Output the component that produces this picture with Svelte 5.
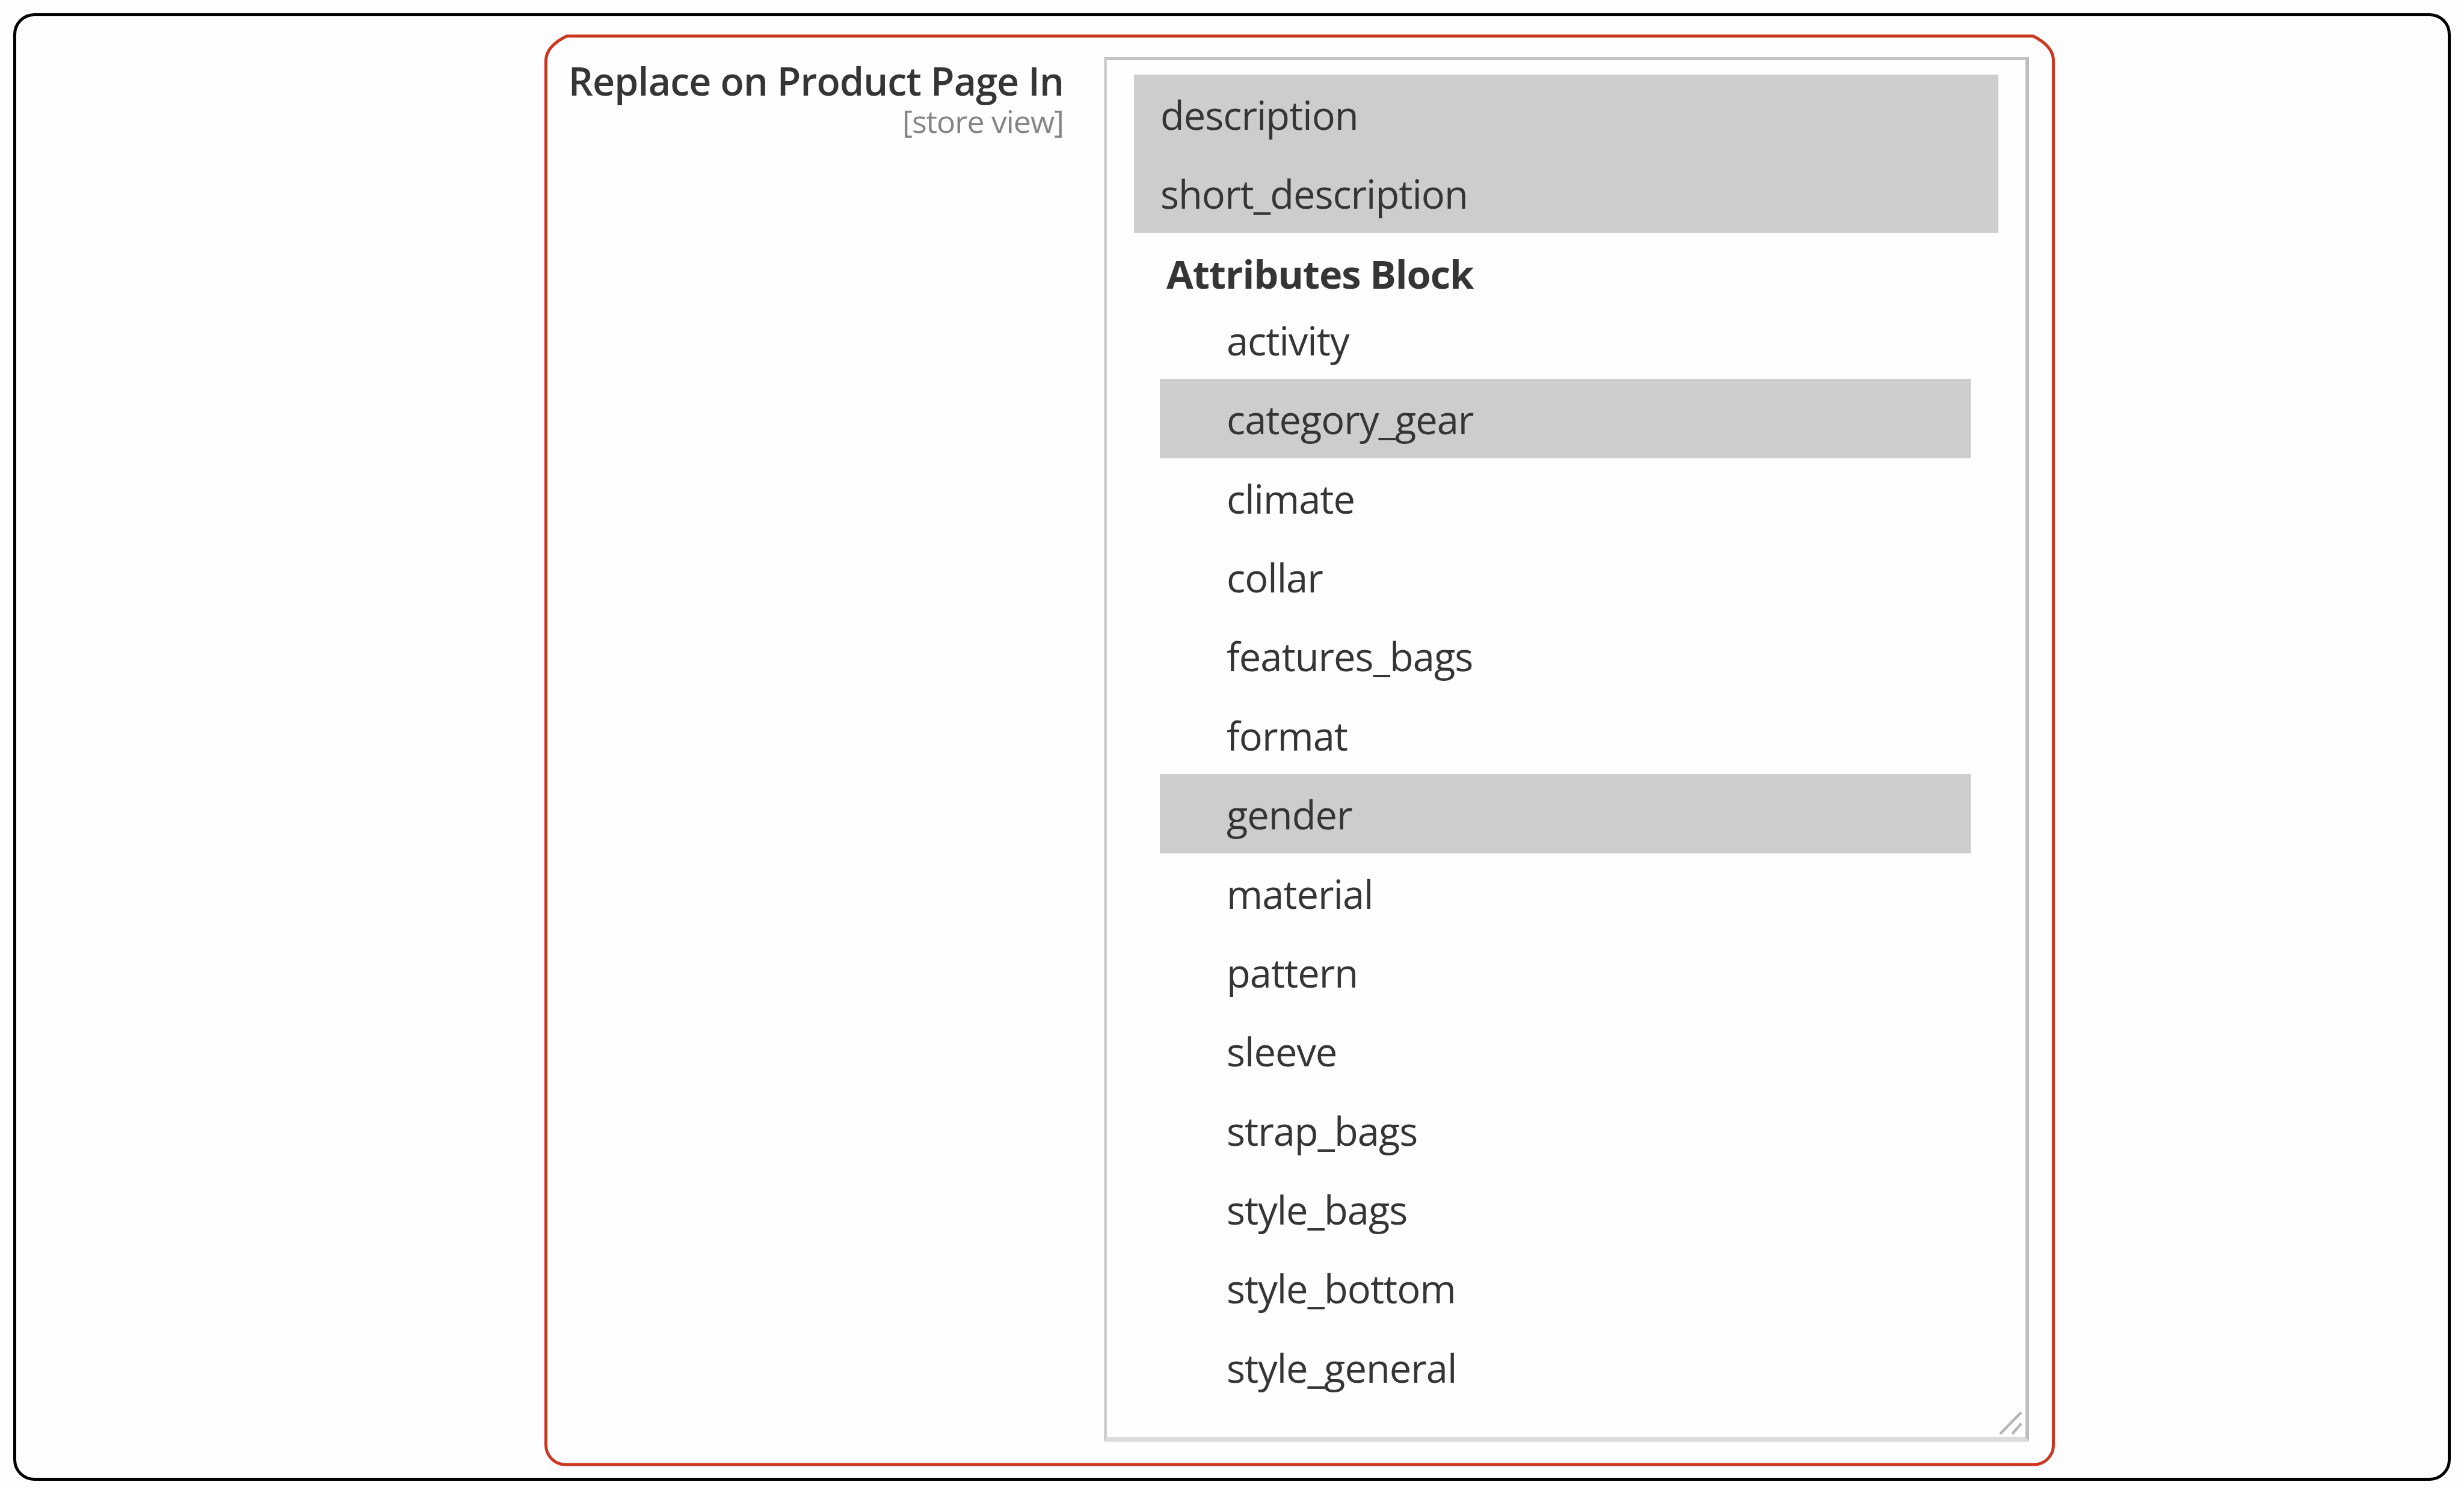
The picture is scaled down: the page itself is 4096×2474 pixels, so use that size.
<script lang="ts">
	/**
	 * Product page setting: multi-select of the attributes to be replaced
	 */
	interface Option {
		name: string;
		selected?: boolean;
	}

	const options: Option[] = [
		{ name: 'description', selected: true },
		{ name: 'short_description', selected: true }
	];

	const attributes: Option[] = [
		{ name: 'activity' },
		{ name: 'category_gear', selected: true },
		{ name: 'climate' },
		{ name: 'collar' },
		{ name: 'features_bags' },
		{ name: 'format' },
		{ name: 'gender', selected: true },
		{ name: 'material' },
		{ name: 'pattern' },
		{ name: 'sleeve' },
		{ name: 'strap_bags' },
		{ name: 'style_bags' },
		{ name: 'style_bottom' },
		{ name: 'style_general' }
	];
</script>

<main class="page">
	<section class="frame">
		<!-- Red highlight around the whole field -->
		<svg class="highlight" viewBox="0 0 4096 2474" fill="none" aria-hidden="true">
			<path
				d="M942 60H3380Q3413.500 77 3413.500 101V2403A32.500 32.500 0 0 1 3381 2435H940A32.500 32.500 0 0 1 907.500 2403V101Q907.500 77 942 60Z"
				stroke="#cc3520"
				stroke-width="5"
			/>
		</svg>

		<div class="field">
			<div class="field-label">
				<span class="title">Replace on Product Page In</span>
				<span class="scope">[store view]</span>
			</div>

			<div class="select" role="listbox" aria-multiselectable="true" aria-label="Replace on Product Page In">
				{#each options as option}
					<div class="option" class:selected={option.selected} role="option" aria-selected={!!option.selected}>
						{option.name}
					</div>
				{/each}

				<div class="group" role="group" aria-label="Attributes Block">
					<div class="group-label">Attributes Block</div>
					{#each attributes as option}
						<div class="option" class:selected={option.selected} role="option" aria-selected={!!option.selected}>
							{option.name}
						</div>
					{/each}
				</div>

				<svg class="grip" viewBox="0 0 42 40" fill="none" stroke="#b4b4b4" stroke-width="4.500" aria-hidden="true">
					<path d="M2 38L37 2M22 38L37 21" />
				</svg>
			</div>
		</div>
	</section>
</main>

<style>
	:global(body) {
		background: #fefefe;
	}

	.page {
		box-sizing: border-box;
		width: 4096px;
		height: 2474px;
		padding: 22px 22px 12px;
		font-family: 'Open Sans', 'Noto Sans', sans-serif;
		color: #353535;
		overflow: hidden;
	}

	.frame {
		box-sizing: border-box;
		height: 2440px;
		border: 5px solid #000;
		border-radius: 35px;
		padding: 68px 696px 0 917px;
	}

	.highlight {
		position: absolute;
		top: 0;
		left: 0;
		width: 4096px;
		height: 2474px;
		pointer-events: none;
	}

	.field {
		display: flex;
		justify-content: space-between;
	}

	.field-label {
		display: flex;
		flex-direction: column;
		align-items: flex-end;
		width: 824px;
		white-space: nowrap;
	}

	.title {
		font-size: 64.500px;
		font-weight: 600;
		letter-spacing: -0.900px;
		line-height: 78px;
	}

	.scope {
		font-size: 52px;
		letter-spacing: -1.100px;
		line-height: 56px;
		color: #858585;
	}

	.select {
		position: relative;
		box-sizing: border-box;
		width: 1538px;
		height: 2302px;
		padding: 24px 45px 0 45px;
		border-style: solid;
		border-width: 5px 6px 8px 5px;
		border-color: #c3c3c3 #bdbdbd #dcdcdc #cfcfcf;
	}

	.option {
		height: 131.400px;
		padding-left: 44px;
		font-size: 65px;
		letter-spacing: -1px;
		line-height: 135px;
		white-space: nowrap;
	}

	.option.selected {
		background: #cdcdcd;
	}

	.group {
		padding: 0 46px 0 43px;
	}

	.group-label {
		height: 112px;
		padding-left: 11px;
		font-size: 65px;
		font-weight: 700;
		letter-spacing: -1.100px;
		line-height: 136px;
		white-space: nowrap;
	}

	.group .option {
		padding-left: 111px;
	}

	.grip {
		position: absolute;
		right: 2px;
		bottom: 3px;
		width: 42px;
		height: 40px;
	}
</style>
